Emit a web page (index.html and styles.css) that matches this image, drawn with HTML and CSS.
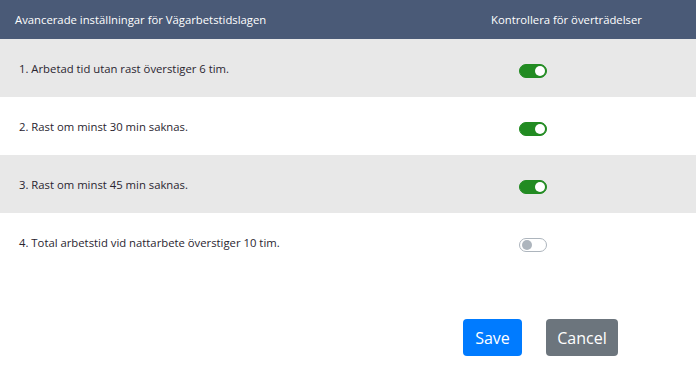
FILE: index.html
```html
<!DOCTYPE html>
<html>
<head>
<meta charset="utf-8">
<link rel="stylesheet" href="styles.css">
</head>
<body>
<div class="page">
  <div class="head">
    <div class="c-label">Avancerade inställningar för Vägarbetstidslagen</div>
    <div class="c-check">Kontrollera för överträdelser</div>
  </div>
  <div class="row alt">
    <div class="c-label">1. Arbetad tid utan rast överstiger 6 tim.</div>
    <div class="c-toggle"><span class="sw on"></span></div>
  </div>
  <div class="row">
    <div class="c-label">2. Rast om minst 30 min saknas.</div>
    <div class="c-toggle"><span class="sw on"></span></div>
  </div>
  <div class="row alt">
    <div class="c-label">3. Rast om minst 45 min saknas.</div>
    <div class="c-toggle"><span class="sw on"></span></div>
  </div>
  <div class="row">
    <div class="c-label">4. Total arbetstid vid nattarbete överstiger 10 tim.</div>
    <div class="c-toggle"><span class="sw"></span></div>
  </div>
  <div class="actions">
    <button class="btn save">Save</button>
    <button class="btn cancel">Cancel</button>
  </div>
</div>
</body>
</html>
```
FILE: styles.css
```css
* { box-sizing: border-box; }
body {
  margin: 0;
  font-family: "Open Sans", "Noto Sans", sans-serif;
  background: #fff;
  color: #212529;
}
.page { width: 696px; }
.head {
  display: flex;
  align-items: center;
  height: 39px;
  background: #4a5a77;
  color: #fff;
  font-size: 11.3px;
}
.head .c-label { padding-left: 15px; flex: 0 0 476px; }
.head .c-check { flex: 0 0 auto; padding-left: 15px; }
.row {
  display: flex;
  align-items: center;
  height: 58px;
  font-size: 11.3px;
  color: #2a2530;
}
.row.alt { background: #e8e8e8; }
.row .c-label { padding-left: 19px; flex: 0 0 500px; padding-top: 1px; }
.c-toggle { display: flex; padding-left: 19px; margin-top: 5px; }
.sw {
  position: relative;
  display: block;
  width: 28px;
  height: 14px;
  border-radius: 7px;
  border: 1px solid #adb5bd;
  background: #fff;
}
.sw::after {
  content: "";
  position: absolute;
  left: 2px;
  top: 1px;
  width: 10px;
  height: 10px;
  border-radius: 50%;
  background: #adb5bd;
}
.sw.on { background: #228b22; border-color: #228b22; }
.sw.on::after { left: 15px; background: #fff; }
.actions {
  display: flex;
  gap: 24px;
  padding: 48px 0 0 463px;
}
.btn {
  font-family: "Open Sans", "Noto Sans", sans-serif;
  font-size: 16px;
  height: 37px;
  border: none;
  border-radius: 4px;
  color: #fff;
  padding: 0;
}
.save { background: #007bff; width: 59px; }
.cancel { background: #6c757d; width: 72px; }
```
